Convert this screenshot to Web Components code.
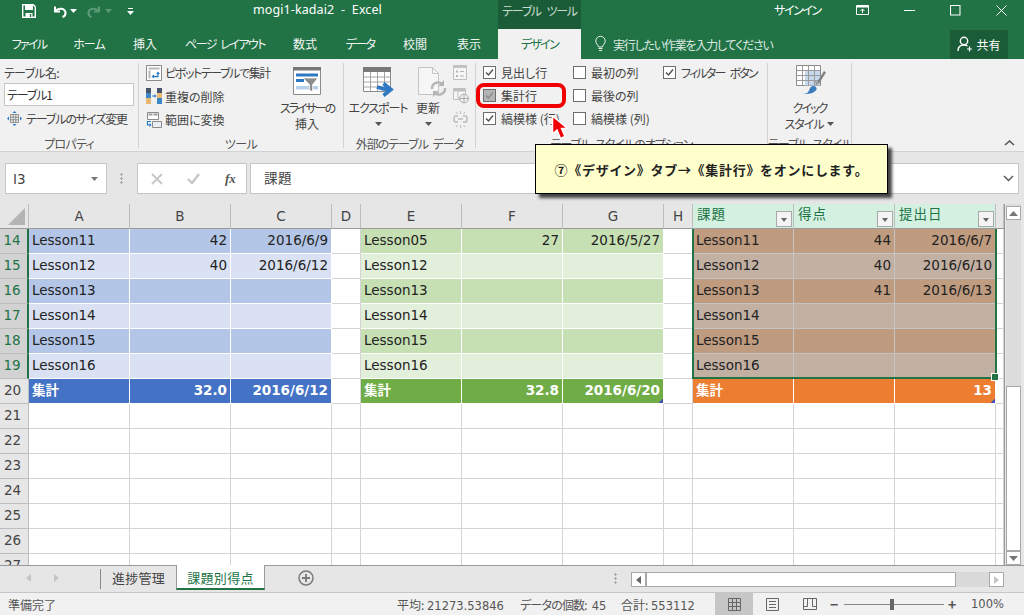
<!DOCTYPE html>
<html lang="ja">
<head>
<meta charset="utf-8">
<title>mogi1-kadai2 - Excel</title>
<style>
    html, body { margin: 0; height: 615px; overflow: hidden; background: #e6e6e6; }
    body {
        font-family: "Noto Sans CJK JP", "Noto Sans", sans-serif;
        font-size: 12px;
        color: #444;
        font-feature-settings: "palt";
    }
</style>
</head>
<body>
<xl-app>
    <xl-titlebar></xl-titlebar>
    <xl-tabs></xl-tabs>
    <xl-ribbon></xl-ribbon>
    <xl-formula></xl-formula>
    <xl-sheet></xl-sheet>
    <xl-sheettabs></xl-sheettabs>
    <xl-status></xl-status>
</xl-app>
<xl-callout>⑦《デザイン》タブ→《集計行》をオンにします。</xl-callout>

<script>
const ICONS = {
    save: [14, 14, '<path d="M.7.7h10.6l2 2v10.6H.7z" fill="none" stroke="#fff" stroke-width="1.4"/><path d="M3 1h8v5H3z" fill="#fff"/><path d="M3.5 9h7v4h-7z" fill="#fff"/><path d="M7.8 10h1.4v3H7.8z" fill="#217346"/>'],
    undo: [15, 13, '<path d="M3 1.5v5h5" fill="none" stroke="#fff" stroke-width="2"/><path d="M3.5 6C6 2.5 13 3 13.5 7.5c.2 2.5-1.5 4-3 4.5" fill="none" stroke="#fff" stroke-width="2"/>'],
    redo: [15, 13, '<path d="M12 1.5v5H7" fill="none" stroke="#5d9a78" stroke-width="2"/><path d="M11.5 6C9 2.5 2 3 1.5 7.5c-.2 2.5 1.5 4 3 4.5" fill="none" stroke="#5d9a78" stroke-width="2"/>'],
    qat: [7, 7, '<path d="M1 0h5v1H1z M0 3h7L3.5 7z" fill="#fff"/>'],
    caret: [7, 4, '<path d="M0 0h7L3.5 4z" fill="currentColor"/>'],
    display: [13, 10, '<path d="M.5.5h12v9H.5z" fill="none" stroke="#fff"/><path d="M.5.5h12v2H.5z" fill="#fff"/><path d="M6.5 8V4M4.5 6l2-2 2 2" fill="none" stroke="#fff"/>'],
    min: [11, 1, '<path d="M0 0h11v1H0z" fill="#fff"/>'],
    max: [11, 11, '<path d="M.5.5h9v9h-9z" transform="scale(1.05)" fill="none" stroke="#fff"/>'],
    close: [11, 11, '<path d="M.5.5l10 10M10.5.5l-10 10" fill="none" stroke="#fff"/>'],
    bulb: [11, 16, '<path d="M3.5 11C3 8.5.8 7.8.8 5a4.7 4.7 0 0 1 9.4 0c0 2.8-2.200 3.500-2.700 6z" fill="none" stroke="#e8f0eb"/><path d="M3.500 12.500h4M4 14.500h3" stroke="#e8f0eb"/>'],
    user: [16, 16, '<circle cx="7" cy="5" r="3.700" fill="none" stroke="#fff" stroke-width="1.400"/><path d="M1 15c0-4 2.500-6 6-6 1.500 0 2.500.3 3.500 1" fill="none" stroke="#fff" stroke-width="1.400"/><path d="M12.500 10.500v5M10 13h5" stroke="#fff" stroke-width="1.200"/>'],
    resize: [15, 15, '<path d="M3.500 3.500h8v8h-8z M3.500 6.200h8M3.500 8.800h8M6.200 3.500v8M8.800 3.500v8" fill="none" stroke="#7a7a7a" stroke-width=".8"/><path d="M7.500 0l2 2h-4zM7.500 15l2-2h-4zM0 7.500l2-2v4zM15 7.500l-2-2v4z" fill="#2b79c2"/>'],
    pivot: [16, 16, '<path d="M.5.5h15v15H.500z" fill="#fff" stroke="#8a8a8a"/><path d="M2.500 2.500h11v2h-11zM2.500 5.500h2v8h-2z" fill="#b9b9b9"/><path d="M7 11.500h5V8" fill="none" stroke="#2b79c2" stroke-width="1.300"/><path d="M10 9l2-2.500L14 9zM8 9.500L5.500 11.500 8 13.500z" fill="#2b79c2"/>'],
    dedupe: [16, 16, '<path d="M0 0h5v5H0zM11 0h5v5h-5z" fill="#45566a"/><path d="M0 5h5v5H0z" fill="#3d86c8"/><path d="M0 10h5v6H0z" fill="#e9b872"/><path d="M11 5h5v5h-5z" fill="#e9b872"/><path d="M11 10h5v6h-5z" fill="#3d86c8"/><path d="M6 8h3" stroke="#2b79c2"/><path d="M8.500 6l2 2-2 2z" fill="#2b79c2"/>'],
    convert: [16, 16, '<path d="M1.500.5h11v7h-11z" fill="#fff" stroke="#8a8a8a"/><path d="M2.500 1.500h4v2h-4zM7.500 1.500h4v2h-4z" fill="#9a9a9a"/><path d="M6.500 9.500h9v6h-9z" fill="#e9eef5" stroke="#8a8a8a"/><path d="M5 9.500H1.500V13H5" fill="none" stroke="#2b79c2" stroke-width="1.200"/><path d="M3.500 11l2 2-2 2z" fill="#2b79c2"/>'],
    slicer: [28, 28, '<path d="M.5.5h27v27H.500z" fill="#fff" stroke="#8a8a8a"/><path d="M0 0h28v3.500H0z" fill="#777"/><path d="M3 6.500h22v3H3z" fill="#2f78c4"/><path d="M3 12h8v3H3z" fill="#2f78c4"/><path d="M3 19h22v3.500H3z" fill="#b9d0ea"/><path d="M10 11h15l-5.500 6.500V25l-3-2v-5.500z" fill="#8c8c8c" stroke="#fff" stroke-width=".7"/>'],
    exportt: [31, 28, '<path d="M.5.5h27v24H.500z" fill="#fff" stroke="#8a8a8a"/><path d="M0 0h28v5H0z" fill="#7a7a7a"/><path d="M.5 10h27M.5 15h27M.5 20h27M7.500 5v19M14.500 5v19M21.500 5v19" stroke="#a5a5a5" fill="none"/><path d="M14 20c4 1.500 8 2.500 13 2.500" fill="none" stroke="#2f78c4" stroke-width="3.600"/><path d="M20.500 16.500l7.500 6-7.500 6" fill="none" stroke="#2f78c4" stroke-width="3.600"/>'],
    update: [28, 28, '<path d="M.5.500h14l6 6v21H.500z" fill="#f6f6f6" stroke="#c4c4c4"/><path d="M14.500.500v6h6" fill="none" stroke="#c4c4c4"/><g transform="translate(0 2)"><path d="M14 20a6 6 0 0 1 10-5M27 19a6 6 0 0 1-10 5" fill="none" stroke="#b5b5b5" stroke-width="2.400"/><path d="M26 11v6h-6zM15 28v-6h6z" fill="#b5b5b5"/></g>'],
    prop: [14, 15, '<path d="M.5.500h13v14H.500z" fill="#f6f6f6" stroke="#c0c0c0"/><path d="M1 1h12v2H1z" fill="#c4c4c4"/><path d="M3 5.500h2v2H3zM3 10h2v2H3zM7 6h4v1H7zM7 10.500h4v1H7z" fill="#b5b5b5"/>'],
    web: [16, 15, '<path d="M.5.500h12v11H.500z" fill="#f6f6f6" stroke="#c0c0c0"/><path d="M1 1h11v2.500H1z" fill="#bfbfbf"/><path d="M5 3.500v8" stroke="#c0c0c0"/><circle cx="11" cy="10.500" r="4.300" fill="#f1f1f1" stroke="#aaa"/><path d="M6.700 10.500h8.600M11 6.200v8.600" stroke="#aaa"/>'],
    unlink: [15, 17, '<path d="M5 5H2.500C.5 5 .5 11 2.500 11H5M10 5h2.500c2 0 2 6 0 6H10M5 8h5" fill="none" stroke="#bbb" stroke-width="1.500"/><path d="M7.500 0v3M3 1l1.500 2M12 1l-1.500 2M7.500 14v3M3 16l1.500-2M12 16l-1.500-2" stroke="#bbb"/>'],
    quick: [30, 30, '<path d="M.5.500h24v20H.500z" fill="#fff" stroke="#8a8a8a"/><path d="M9 5.500h15v15H9z" fill="#c5d7ec"/><path d="M.5 5.500h24M.5 10.500h24M.5 15.500h24M6.500.500v20M12.500.500v20M18.500.500v20" fill="none" stroke="#9a9a9a"/><path d="M21 17l7-11 2 1.500-7 11z" fill="#808080"/><path d="M19 15.500l4 3-3 2z" fill="#9a9a9a"/><path d="M7 29c5 0 6-3 7-6 1-2 4-3 6-1 1.500 2 0 4-2 5-3 2-7 2-11 2z" fill="#3c7cbd"/>'],
    chevup: [11, 6, '<path d="M1 5l4.500-4L10 5" fill="none" stroke="#555" stroke-width="1.600"/>'],
    cross: [12, 12, '<path d="M1 1l10 10M11 1L1 11" stroke="#c6c6c6" stroke-width="1.800"/>'],
    check: [13, 11, '<path d="M1 6l4 4 7-9" fill="none" stroke="#c6c6c6" stroke-width="2.400"/>'],
    plus: [16, 16, '<circle cx="8" cy="8" r="7" fill="none" stroke="#7a7a7a" stroke-width="1.500"/><path d="M8 4v8M4 8h8" stroke="#7a7a7a" stroke-width="1.800"/>'],
    normal: [13, 13, '<path d="M.5.500h12v12H.500zM.5 4.500h12M.5 8.500h12M4.500.500v12M8.500.500v12" fill="none" stroke="#666"/>'],
    layout: [13, 13, '<path d="M.5.500h12v12H.500z" fill="none" stroke="#666"/><path d="M3 3.500h7M3 6.500h7M3 9.500h7" stroke="#666"/>'],
    pagebreak: [14, 12, '<path d="M.5.500h13v11H.500zM.5 8.500h4V.500M9.500.500v8h4" fill="none" stroke="#666"/>']
};

// icon drawn from the table above, 1 user unit = 1 px
class XlIcon extends HTMLElement {
    connectedCallback() {
        const [w, h, body] = ICONS[this.getAttribute('name')];
        this.attachShadow({ mode: 'open' }).innerHTML = `
            <style>:host { display: inline-flex; flex: none; line-height: 0; } svg { display: block; overflow: visible; }</style>
            <svg width="${w}" height="${h}" viewBox="0 0 ${w} ${h}">${body}</svg>`;
    }
}

class XlApp extends HTMLElement {
    connectedCallback() {
        this.attachShadow({ mode: 'open' }).innerHTML = `
            <style>:host { display: flex; flex-direction: column; width: 1024px; height: 615px; overflow: hidden; }</style>
            <slot></slot>`;
    }
}

class XlTitlebar extends HTMLElement {
    connectedCallback() {
        this.attachShadow({ mode: 'open' }).innerHTML = `
            <style>
                :host { display: flex; align-items: flex-start; height: 29px; background: #217346; color: #fff; flex: none; }
                .qat { display: flex; align-items: center; width: 245px; padding: 4px 0 0 22px; box-sizing: border-box; }
                .cap { color: #a3c5b1; }
                .title { width: 245px; margin-left: 8px; font-size: 12.5px; line-height: 20px; white-space: pre; font-family: "Noto Sans", sans-serif; letter-spacing: .1px; }
                .context { width: 83px; height: 29px; line-height: 21px; background: #1b5c38; color: #c9dcd1; text-align: center; font-size: 12px; box-sizing: border-box; letter-spacing: -1.200px; word-spacing: 4px; }
                .sign { margin-left: 193px; font-size: 12px; width: 82px; line-height: 20px; letter-spacing: -1.400px; }
                .win { display: flex; align-items: center; height: 20px; }
            </style>
            <div class="qat">
                <xl-icon name="save"></xl-icon>
                <xl-icon name="undo" style="margin-left:16px"></xl-icon>
                <xl-icon name="caret" style="margin-left:3px"></xl-icon>
                <xl-icon class="cap" name="redo" style="margin-left:10px"></xl-icon>
                <xl-icon class="cap" name="caret" style="margin-left:3px;color:#5d9a78"></xl-icon>
                <xl-icon name="qat" style="margin-left:15px"></xl-icon>
            </div>
            <div class="title">mogi1-kadai2  -  Excel</div>
            <div class="context">テーブル ツール</div>
            <div class="sign">サインイン</div>
            <div class="win">
                <xl-icon name="display"></xl-icon>
                <xl-icon name="min" style="margin-left:35px"></xl-icon>
                <xl-icon name="max" style="margin-left:35px"></xl-icon>
                <xl-icon name="close" style="margin-left:35px"></xl-icon>
            </div>`;
    }
}

class XlTabs extends HTMLElement {
    connectedCallback() {
        // each tab: text, slot width, letter-spacing to get the narrow kana of the original face
        const names = [['ファイル', 58, -1.7], ['ホーム', 62, -1], ['挿入', 50, 0], ['ページ レイアウト', 110, -1.5],
            ['数式', 50, 0], ['データ', 60, -1.6], ['校閲', 50, 0], ['表示', 58, 0]];
        this.attachShadow({ mode: 'open' }).innerHTML = `
            <style>
                :host { display: flex; align-items: center; height: 30px; background: #217346; color: #f1f6f3; flex: none; }
                .tab { flex: none; text-align: center; line-height: 30px; white-space: nowrap; margin-top: -1px; word-spacing: 3px; }
                .on { width: 83px; margin: 0 14px 0 0; height: 30px; background: #f1f1f1; color: #217346; letter-spacing: -1.700px; }
                .tell { display: flex; align-items: center; gap: 7px; color: #dce8e1; width: 355px; letter-spacing: -1.200px; flex: none; }
                .share { display: flex; align-items: center; justify-content: center; gap: 3px; width: 58px; height: 29px; background: #1b5c38; color: #fff; flex: none; }
            </style>
            ${names.map(([n, w, ls]) => `<div class="tab" style="width:${w}px;letter-spacing:${ls}px">${n}</div>`).join('')}
            <div class="tab on">デザイン</div>
            <div class="tell"><xl-icon name="bulb"></xl-icon>実行したい作業を入力してください</div>
            <div class="share"><xl-icon name="user"></xl-icon>共有</div>`;
    }
}

class RbGroup extends HTMLElement {
    connectedCallback() {
        this.attachShadow({ mode: 'open' }).innerHTML = `
            <style>
                :host { display: flex; flex-direction: column; flex: none; box-sizing: border-box; height: 85px; margin-top: 4px; border-right: 1px solid #d2d2d2; position: relative; }
                .body { flex: 1; display: flex; min-height: 0; }
                .label { height: 16px; line-height: 16px; margin-bottom: -4px; text-align: center; color: #555; white-space: nowrap; word-spacing: 3px; letter-spacing: ${this.getAttribute('ls') || 0}px; }
            </style>
            <div class="body"><slot></slot></div>
            <div class="label">${this.getAttribute('label')}</div>`;
    }
}

class RbBig extends HTMLElement {
    connectedCallback() {
        this.attachShadow({ mode: 'open' }).innerHTML = `
            <style>
                :host { display: flex; flex-direction: column; align-items: center; flex: none; text-align: center; line-height: 16px; white-space: nowrap; color: #444; }
                .icon { height: 35px; display: flex; align-items: flex-end; padding-bottom: 3px; box-sizing: border-box; margin-bottom: 2px; }
            </style>
            <div class="icon"><slot name="icon"></slot></div>
            <slot></slot>`;
    }
}

class RbRow extends HTMLElement {
    connectedCallback() {
        this.attachShadow({ mode: 'open' }).innerHTML = `
            <style>:host { display: flex; align-items: center; gap: 3px; height: 23.5px; white-space: nowrap; color: #444; }</style>
            <slot></slot>`;
    }
}

class RbCheck extends HTMLElement {
    connectedCallback() {
        const on = this.hasAttribute('checked');
        const dim = this.hasAttribute('dim');
        this.attachShadow({ mode: 'open' }).innerHTML = `
            <style>
                :host { display: flex; align-items: center; gap: 5px; height: 23px; white-space: nowrap; color: #444; }
                .box { width: 11px; height: 11px; border: 1px solid #6d6d6d; background: ${dim ? '#b4b4b4' : '#fff'}; flex: none; }
                svg { display: block; }
            </style>
            <div class="box">${on ? `<svg width="11" height="11" viewBox="0 0 11 11"><path d="M2 5.500l2.500 2.500L9 2.500" fill="none" stroke="${dim ? '#8a8a8a' : '#555'}" stroke-width="1.500"/></svg>` : ''}</div>
            <slot></slot>`;
    }
}

class XlRibbon extends HTMLElement {
    connectedCallback() {
        this.attachShadow({ mode: 'open' }).innerHTML = `
            <style>
                :host { display: flex; height: 93px; background: #f1f1f1; border-bottom: 1px solid #d2d2d2; box-sizing: border-box; flex: none; position: relative; }
                .t1 { letter-spacing: -.7px; }
                .t2 { letter-spacing: -1.1px; }
                .t3 { letter-spacing: -1.4px; }
                .t4 { letter-spacing: -2px; }
                .name { padding: 2px 0 0 4px; width: 134px; box-sizing: border-box; }
                .name .cap { height: 16px; line-height: 16px; margin-bottom: 1px; }
                .name .input { width: 130px; height: 23px; margin-top: 2px; box-sizing: border-box; border: 1px solid #c6c6c6; background: #fff; line-height: 21px; padding-left: 2px; color: #333; }
                .name rb-row { margin: 1px 0 0 3px; gap: 4px; }
                .list { margin-top: -2px; flex: none; }
                .col { display: flex; flex-direction: column; flex: none; margin-top: -2px; }
                .side { display: flex; flex-direction: column; gap: 8px; padding: 2px 0 0 0; margin-left: 9px; color: #c0c0c0; }
                .mark { position: absolute; left: 476px; top: 24px; width: 90px; height: 25px; border: 4px solid #f00000; border-radius: 8px; box-sizing: border-box; }
                .chev { position: absolute; right: 9px; bottom: 5px; }
                .caret { color: #555; margin-top: 6px; }
                .style-row { display: flex; align-items: center; gap: 4px; }
                .style-row xl-icon { color: #555; }
                .filter-btn { letter-spacing: -1.800px; word-spacing: 4px; }
            </style>
            <rb-group label="プロパティ" ls="-.8" style="width:139px">
                <div class="name">
                    <div class="cap t1">テーブル名:</div>
                    <div class="input t2">テーブル1</div>
                    <rb-row><xl-icon name="resize"></xl-icon><span class="t2">テーブルのサイズ変更</span></rb-row>
                </div>
            </rb-group>
            <rb-group label="ツール" ls="-.5" style="width:205px">
                <div class="list" style="width:147px;padding-left:7px;box-sizing:border-box">
                    <rb-row><xl-icon name="pivot"></xl-icon><span class="t3">ピボットテーブルで集計</span></rb-row>
                    <rb-row><xl-icon name="dedupe"></xl-icon>重複の削除</rb-row>
                    <rb-row><xl-icon name="convert"></xl-icon>範囲に変換</rb-row>
                </div>
                <rb-big style="width:58px;margin-left:-8px;">
                    <xl-icon slot="icon" name="slicer"></xl-icon>
                    <span class="t4">スライサーの</span>
                    挿入
                </rb-big>
            </rb-group>
            <rb-group label="外部のテーブル データ" ls="-1" style="width:132px">
                <rb-big style="width:68px">
                    <xl-icon slot="icon" name="exportt"></xl-icon>
                    <span class="t2">エクスポート</span>
                    <xl-icon class="caret" name="caret"></xl-icon>
                </rb-big>
                <rb-big style="width:32px">
                    <xl-icon slot="icon" name="update" style="margin-left:8px"></xl-icon>
                    更新
                    <xl-icon class="caret" name="caret"></xl-icon>
                </rb-big>
                <div class="side" style="margin-left:9px">
                    <xl-icon name="prop"></xl-icon>
                    <xl-icon name="web"></xl-icon>
                    <xl-icon name="unlink"></xl-icon>
                </div>
            </rb-group>
            <rb-group label="テーブル スタイルのオプション" ls="-1" style="width:292px">
                <div class="col" style="width:90px;margin-left:7px">
                    <rb-check checked>見出し行</rb-check>
                    <rb-check checked dim>集計行</rb-check>
                    <rb-check checked>縞模様 (行)</rb-check>
                </div>
                <div class="col" style="width:90px">
                    <rb-check>最初の列</rb-check>
                    <rb-check>最後の列</rb-check>
                    <rb-check>縞模様 (列)</rb-check>
                </div>
                <div class="col">
                    <rb-check checked><span class="filter-btn">フィルター ボタン</span></rb-check>
                </div>
            </rb-group>
            <rb-group label="テーブル スタイル" ls="-1" style="width:84px">
                <rb-big style="width:83px">
                    <xl-icon slot="icon" name="quick" style="margin-left:2px"></xl-icon>
                    <span class="t4">クイック</span>
                    <div class="style-row"><span class="t2">スタイル</span><xl-icon name="caret"></xl-icon></div>
                </rb-big>
            </rb-group>
            <div class="mark"></div>
            <xl-icon class="chev" name="chevup"></xl-icon>`;
    }
}

class XlFormula extends HTMLElement {
    connectedCallback() {
        this.attachShadow({ mode: 'open' }).innerHTML = `
            <style>
                :host { display: flex; align-items: flex-start; height: 52px; background: #e6e6e6; flex: none; padding: 11px 5px 0; box-sizing: border-box; }
                .box { height: 31px; box-sizing: border-box; border: 1px solid #c6c6c6; background: #fff; display: flex; align-items: center; }
                .namebox { width: 102px; justify-content: space-between; padding: 0 8px 0 7px; font: 13.5px "DejaVu Sans", sans-serif; color: #444; }
                .namebox xl-icon { color: #777; }
                .dots { width: 3px; height: 11px; margin: 10px 14px 0 13px; background: radial-gradient(circle at 1.5px 1.5px, #aaa 1.2px, transparent 1.3px) 0 0 / 3px 4px; }
                .fx { width: 110px; padding-left: 13px; }
                .fx i { font: italic bold 13px "Liberation Serif", serif; color: #555; margin-left: 25px; }
                .input { flex: 1; margin-left: 3px; padding: 0 3px 3px 13px; font-size: 13.5px; color: #444; justify-content: space-between; letter-spacing: .5px; }
                .input svg { margin: 3px 1px 0 0; }
            </style>
            <div class="box namebox">I3<xl-icon name="caret"></xl-icon></div>
            <div class="dots"></div>
            <div class="box fx">
                <xl-icon name="cross"></xl-icon>
                <xl-icon name="check" style="margin-left:24px"></xl-icon>
                <i>fx</i>
            </div>
            <div class="box input">課題<svg width="11" height="7" viewBox="0 0 11 7"><path d="M1 1l4.500 4.500L10 1" fill="none" stroke="#555" stroke-width="1.400"/></svg></div>`;
    }
}

const COLS = ['A', 'B', 'C', 'D', 'E', 'F', 'G', 'H', 'I', 'J', 'K', 'L'];
const TABLES = [
    { col: 0, odd: '#b4c6e7', even: '#d9e1f2', total: '#4472c4', line: '#fff',
      rows: [['Lesson11', '42', '2016/6/9'], ['Lesson12', '40', '2016/6/12'], ['Lesson13'], ['Lesson14'], ['Lesson15'], ['Lesson16']],
      sum: ['集計', '32.0', '2016/6/12'] },
    { col: 4, odd: '#c6e0b4', even: '#e2efda', total: '#70ad47', line: '#fff',
      rows: [['Lesson05', '27', '2016/5/27'], ['Lesson12'], ['Lesson13'], ['Lesson14'], ['Lesson15'], ['Lesson16']],
      sum: ['集計', '32.8', '2016/6/20'], mark: true },
    { col: 8, odd: '#bf9b80', even: '#c2b0a3', total: '#ed7d31', line: '#c4c4c4',
      rows: [['Lesson11', '44', '2016/6/7'], ['Lesson12', '40', '2016/6/10'], ['Lesson13', '41', '2016/6/13'], ['Lesson14'], ['Lesson15'], ['Lesson16']],
      sum: ['集計', '', '13'], mark: true }
];

class XlSheet extends HTMLElement {
    connectedCallback() {
        this.attachShadow({ mode: 'open' }).innerHTML = `
            <style>
                :host { display: flex; height: 361px; flex: none; background: #e6e6e6; border-bottom: 1px solid #9a9a9a; box-sizing: content-box; }
                .grid {
                    display: grid; width: 1004px; height: 361px; overflow: hidden; flex: none;
                    grid-template-columns: 29px repeat(3, 101px) 29px repeat(3, 101px) 29px repeat(3, 101px) 8px;
                    grid-auto-rows: 25px;
                    background: #fff; border-right: 1px solid #9a9a9a;
                    font: 13.5px "DejaVu Sans", "Noto Sans CJK JP", sans-serif; color: #222;
                    font-feature-settings: normal;
                    position: relative; box-sizing: content-box;
                }
                .c { box-sizing: border-box; border-right: 1px solid #d4d4d4; border-bottom: 1px solid #d4d4d4; line-height: 23px; padding: 0 3px; white-space: nowrap; overflow: hidden; position: relative; }
                .num { text-align: right; }
                .hd { background: #e6e6e6; color: #444; text-align: center; border-right-color: #bdbdbd; border-bottom-color: #9a9a9a; padding: 0; line-height: 24px; }
                .corner::after { content: ""; position: absolute; left: 8px; top: 4px; border-style: solid; border-width: 0 0 17px 17px; border-color: transparent transparent #b4b4b4 transparent; }
                .rh { background: #e6e6e6; color: #444; text-align: center; border-right-color: #bdbdbd; padding: 0 3px 0 0; border-bottom-color: #bdbdbd; }
                .rh.sel { background: #d2d2d2; color: #217346; border-right: 2px solid #217346; }
                .th { background: #d3f0e0; color: #217346; border-right-color: #bdbdbd; border-bottom-color: #9a9a9a; letter-spacing: 1px; padding-left: 4px; line-height: 21px; }
                .filter { position: absolute; right: 1px; bottom: 1px; width: 16px; height: 16px; box-sizing: border-box; border: 1px solid #a8a8a8; background: #f4f4f4; }
                .filter::after { content: ""; position: absolute; left: 4px; top: 6px; border-style: solid; border-width: 4px 3.500px 0 3.500px; border-color: #666 transparent transparent transparent; }
                .total { color: #fff; font-weight: bold; }
                .tick::after { content: ""; position: absolute; right: 0; bottom: 0; width: 4px; height: 4px; background: linear-gradient(135deg, transparent 40%, #3f51b5 41%); }
                .selection { position: absolute; left: 692px; top: 25px; width: 305px; height: 150px; box-sizing: border-box; border: 2px solid #217346; border-top: 0; pointer-events: none; }
                .handle { position: absolute; right: -4px; bottom: -4px; width: 6px; height: 6px; background: #217346; border: 1px solid #fff; }
                .vbar { width: 15px; margin-left: 1px; height: 361px; background: #dcdcdc; display: flex; flex-direction: column; justify-content: space-between; position: relative; flex: none; }
                .btn { height: 14px; box-sizing: border-box; border: 1px solid #a8a8a8; background: #fff; display: flex; align-items: center; justify-content: center; color: #777; }
                .thumb { position: absolute; left: 0; right: 0; top: 182px; height: 165px; box-sizing: border-box; background: #fff; border: 1px solid #a8a8a8; }
            </style>
            <div class="grid">${this.cells()}
                <div class="selection"><div class="handle"></div></div>
            </div>
            <div class="vbar">
                <div class="btn" style="margin-top:2px"><svg width="9" height="5" viewBox="0 0 9 5"><path d="M0 5h9L4.500 0z" fill="#777"/></svg></div>
                <div class="thumb"></div>
                <div class="btn"><svg width="9" height="5" viewBox="0 0 9 5"><path d="M0 0h9L4.500 5z" fill="#777"/></svg></div>
            </div>`;
    }

    cells() {
        let out = '<div class="c hd corner"></div>';
        // header row: the letters stop at H, the selected table shows its own titles
        COLS.forEach((name, i) => {
            if (i >= 8 && i <= 10) {
                const title = ['課題', '得点', '提出日'][i - 8];
                out += `<div class="c th">${title}<span class="filter"></span></div>`;
            } else {
                out += `<div class="c hd">${i === 11 ? '' : name}</div>`;
            }
        });
        for (let r = 0; r < 14; r++) {
            const rowNo = 14 + r;
            out += `<div class="c rh ${r < 6 ? 'sel' : ''}">${rowNo}</div>`;
            for (let c = 0; c < 12; c++) {
                out += this.cell(r, c);
            }
        }
        return out;
    }

    cell(r, c) {
        const table = TABLES.find(t => c >= t.col && c < t.col + 3);
        if (!table || r > 6) {
            return '<div class="c"></div>';
        }
        const i = c - table.col;
        if (r === 6) {
            const tick = table.mark && i === 2 ? 'tick' : '';
            return `<div class="c total ${i ? 'num' : ''} ${tick}" style="background:${table.total};border-color:#fff">${table.sum[i]}</div>`;
        }
        const text = table.rows[r][i] || '';
        const bg = r % 2 ? table.even : table.odd;
        return `<div class="c ${i ? 'num' : ''}" style="background:${bg};border-color:${table.line}">${text}</div>`;
    }
}

class XlSheettabs extends HTMLElement {
    connectedCallback() {
        this.attachShadow({ mode: 'open' }).innerHTML = `
            <style>
                :host { display: flex; align-items: flex-start; height: 26px; background: #e6e6e6; flex: none; border-bottom: 1px solid #c6c6c6; box-sizing: content-box; position: relative; }
                .nav { display: flex; align-items: center; gap: 23px; width: 100px; height: 24px; box-sizing: border-box; padding-left: 26px; }
                .tri { width: 0; height: 0; border-style: solid; border-width: 4px 5px 4px 0; border-color: transparent #c4c4c4 transparent transparent; }
                .tri.r { border-width: 4px 0 4px 5px; border-color: transparent transparent transparent #c4c4c4; }
                .sep { width: 1px; height: 20px; background: #8a8a8a; margin-top: 3px; }
                .tab { width: 75px; text-align: center; line-height: 24px; font-size: 13px; color: #444; letter-spacing: .3px; }
                .on { width: 89px; height: 25px; box-sizing: border-box; background: #fff; color: #217346; border-left: 1px solid #9a9a9a; border-right: 1px solid #9a9a9a; border-bottom: 2px solid #217346; margin-top: -1px; line-height: 25px; }
                .plus { margin: 4px 0 0 33px; }
                .dots { position: absolute; left: 614px; top: 7px; width: 3px; height: 11px; background: radial-gradient(circle at 1.5px 1.5px, #aaa 1.2px, transparent 1.3px) 0 0 / 3px 4px; }
                .hbar { position: absolute; left: 631px; top: 6px; width: 373px; height: 15px; background: #d9d9d9; display: flex; }
                .b { width: 15px; height: 15px; box-sizing: border-box; background: #fff; border: 1px solid #a8a8a8; display: flex; align-items: center; justify-content: center; flex: none; }
                .thumb { width: 310px; height: 15px; box-sizing: border-box; background: #fff; border: 1px solid #a8a8a8; flex: none; }
                .end { margin-left: auto; }
                .dk { border-color: transparent #666 transparent transparent; }
                .dkr { border-color: transparent transparent transparent #666; }
            </style>
            <div class="nav"><div class="tri"></div><div class="tri r"></div></div>
            <div class="sep"></div>
            <div class="tab">進捗管理</div>
            <div class="tab on">課題別得点</div>
            <xl-icon class="plus" name="plus"></xl-icon>
            <div class="dots"></div>
            <div class="hbar">
                <div class="b"><div class="tri dk"></div></div>
                <div class="thumb"></div>
                <div class="b end"><div class="tri r dkr"></div></div>
            </div>`;
    }
}

class XlStatus extends HTMLElement {
    connectedCallback() {
        this.attachShadow({ mode: 'open' }).innerHTML = `
            <style>
                :host { display: flex; align-items: center; height: 22px; background: #f1f1f1; flex: none; color: #555; font-size: 12px; white-space: nowrap; padding-left: 8px; }
                .ready { width: 389px; flex: none; }
                .n { font-family: "DejaVu Sans", "Noto Sans CJK JP", sans-serif; font-size: 11.5px; letter-spacing: 0; }
                .stat { flex: none; }
                .t1 { letter-spacing: -.8px; word-spacing: 3px; }
                .view { width: 38px; height: 22px; display: flex; align-items: center; justify-content: center; flex: none; }
                .view.on { background: #c6c6c6; }
                .zoom { display: flex; align-items: center; margin-left: 1px; flex: none; }
                .bar { position: relative; width: 100px; height: 1px; background: #888; margin: 0 4px 0 6px; }
                .bar i { position: absolute; left: 46px; top: -5px; width: 4px; height: 11px; background: #666; }
                .sign { font-weight: bold; font-size: 14px; line-height: 14px; width: 8px; text-align: center; color: #555; }
                .pct { margin-left: 15px; }
            </style>
            <div class="ready">準備完了</div>
            <div class="stat" style="width:123px">平均: <span class="n">21273.53846</span></div>
            <div class="stat t1" style="width:101px">データの個数: <span class="n">45</span></div>
            <div class="stat" style="width:94px">合計: <span class="n">553112</span></div>
            <div class="view on"><xl-icon name="normal"></xl-icon></div>
            <div class="view"><xl-icon name="layout"></xl-icon></div>
            <div class="view"><xl-icon name="pagebreak"></xl-icon></div>
            <div class="zoom"><span class="sign">−</span><div class="bar"><i></i></div><span class="sign">+</span></div>
            <div class="pct n">100%</div>`;
    }
}

// yellow note and red pointer, both lie over the ribbon
class XlCallout extends HTMLElement {
    connectedCallback() {
        this.attachShadow({ mode: 'open' }).innerHTML = `
            <style>
                :host { position: absolute; left: 535px; top: 144px; width: 353px; height: 50px; box-sizing: border-box; background: #ffffcc; border: 1px solid #000; box-shadow: 4px 4px 3px #444; display: flex; align-items: center; justify-content: center; color: #222; font-weight: bold; font-size: 13px; font-feature-settings: normal; letter-spacing: .7px; }
                svg { position: absolute; left: 15px; top: -30px; }
            </style>
            <slot></slot>
            <svg width="20" height="26" viewBox="0 0 20 26"><path d="M1.500 1V19L6 15l3.500 8.500 4.500-2-3.500-8h6z" fill="#f00000" stroke="#fff" stroke-width="1.500"/></svg>`;
    }
}

customElements.define('xl-icon', XlIcon);
customElements.define('xl-app', XlApp);
customElements.define('xl-titlebar', XlTitlebar);
customElements.define('xl-tabs', XlTabs);
customElements.define('rb-group', RbGroup);
customElements.define('rb-big', RbBig);
customElements.define('rb-row', RbRow);
customElements.define('rb-check', RbCheck);
customElements.define('xl-ribbon', XlRibbon);
customElements.define('xl-formula', XlFormula);
customElements.define('xl-sheet', XlSheet);
customElements.define('xl-sheettabs', XlSheettabs);
customElements.define('xl-status', XlStatus);
customElements.define('xl-callout', XlCallout);
</script>
</body>
</html>
